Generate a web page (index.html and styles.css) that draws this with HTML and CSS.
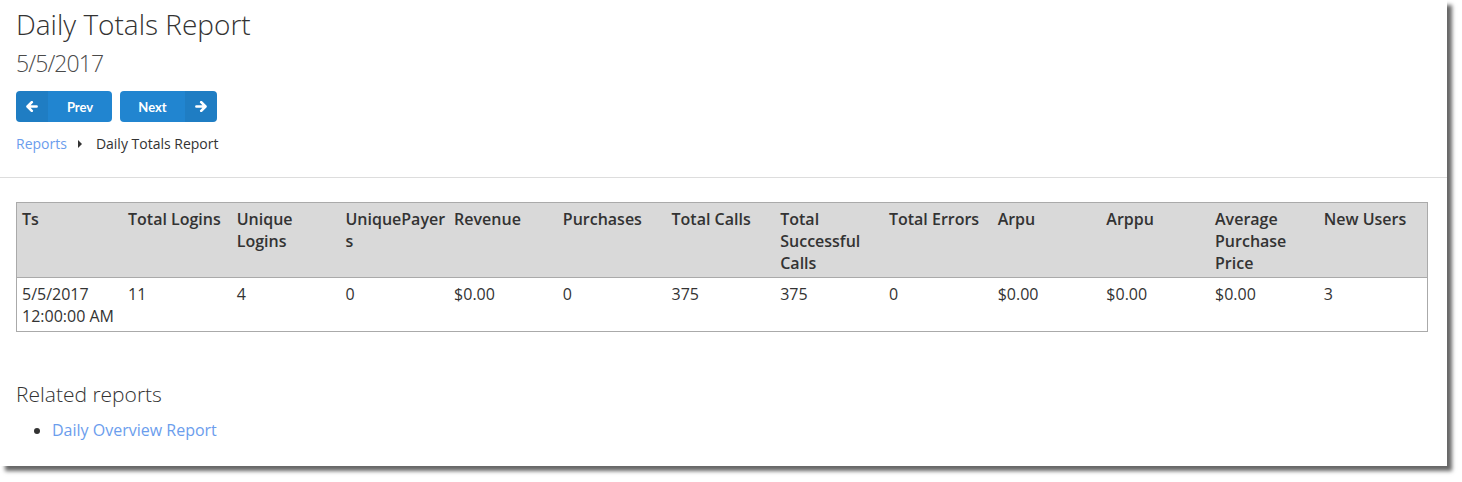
FILE: index.html
```html
<!DOCTYPE html>
<html>
<head>
<meta charset="utf-8">
<link rel="stylesheet" href="styles.css">
</head>
<body>
<div class="panel">
  <header class="head">
    <h1 class="title">Daily Totals Report</h1>
    <h2 class="date">5/5/2017</h2>
    <div class="buttons">
      <a class="btn btn-left" href="#">
        <span class="btn-icon"><svg width="12" height="11" viewBox="0 0 12 11"><path d="M5.8 1.2 L1.5 5.5 L5.8 9.8 M2 5.5 H10.6" fill="none" stroke="#fff" stroke-width="2.6" stroke-linecap="round" stroke-linejoin="round"/></svg></span>
        <span class="btn-text">Prev</span>
      </a>
      <a class="btn btn-right" href="#">
        <span class="btn-text">Next</span>
        <span class="btn-icon"><svg width="12" height="11" viewBox="0 0 12 11"><path d="M6.2 1.2 L10.5 5.5 L6.2 9.8 M10 5.5 H1.4" fill="none" stroke="#fff" stroke-width="2.6" stroke-linecap="round" stroke-linejoin="round"/></svg></span>
      </a>
    </div>
    <nav class="crumbs">
      <a class="crumb-link" href="#">Reports</a>
      <span class="crumb-sep"></span>
      <span class="crumb-current">Daily Totals Report</span>
    </nav>
  </header>
  <hr class="rule">
  <main class="content">
    <table class="grid">
      <thead>
        <tr>
          <th class="col-first">Ts</th><th>Total Logins</th><th>Unique Logins</th><th>UniquePayers</th><th>Revenue</th><th>Purchases</th><th>Total Calls</th><th>Total Successful Calls</th><th>Total Errors</th><th>Arpu</th><th>Arppu</th><th>Average Purchase Price</th><th>New Users</th>
        </tr>
      </thead>
      <tbody>
        <tr>
          <td>5/5/2017 12:00:00 AM</td><td>11</td><td>4</td><td>0</td><td>$0.00</td><td>0</td><td>375</td><td>375</td><td>0</td><td>$0.00</td><td>$0.00</td><td>$0.00</td><td>3</td>
        </tr>
      </tbody>
    </table>
    <h3 class="related">Related reports</h3>
    <ul class="related-list">
      <li><a class="rel-link" href="#">Daily Overview Report</a></li>
    </ul>
  </main>
</div>
</body>
</html>
```

FILE: styles.css
```css
html, body {
  margin: 0;
  padding: 0;
  background: #fff;
}
body {
  font-family: "Open Sans", "Liberation Sans", sans-serif;
  color: #333;
  width: 1462px;
  height: 482px;
  overflow: hidden;
}
.panel {
  width: 1447px;
  height: 466px;
  background: #fff;
  box-shadow: 5px 5px 4px rgba(0, 0, 0, 0.6);
  box-sizing: border-box;
}
.head {
  padding: 7px 16px 0;
}
.title {
  margin: 0;
  font-size: 28px;
  line-height: 34px;
  font-weight: 300;
  color: #333;
}
.date {
  margin: 7px 0 0;
  font-size: 23px;
  line-height: 30px;
  font-weight: 300;
  letter-spacing: -0.9px;
  color: #4a4a4a;
}
.buttons {
  display: flex;
  gap: 8px;
  margin-top: 13px;
}
.btn {
  display: flex;
  align-items: stretch;
  height: 31px;
  background: #2185d0;
  border-radius: 4px;
  overflow: hidden;
  text-decoration: none;
  color: #fff;
  font-family: Lato, "Liberation Sans", sans-serif;
  font-weight: 700;
  font-size: 13px;
}
.btn-left { width: 96px; }
.btn-right { width: 97px; }
.btn-icon {
  width: 32px;
  display: flex;
  align-items: center;
  justify-content: center;
  background: rgba(0, 0, 0, 0.06);
}
.btn-text {
  flex: 1;
  display: flex;
  align-items: center;
  justify-content: center;
}
.crumbs {
  display: flex;
  align-items: center;
  margin-top: 12px;
  font-size: 14px;
  line-height: 20px;
}
.crumb-link {
  color: #6b9ded;
  text-decoration: none;
}
.crumb-sep {
  width: 0;
  height: 0;
  border-top: 4px solid transparent;
  border-bottom: 4px solid transparent;
  border-left: 4px solid #333;
  margin: 0 14px 0 11px;
}
.crumb-current {
  color: #333;
}
.rule {
  margin: 23px 0 0;
  border: 0;
  border-top: 1px solid #ddd;
  height: 0;
}
.content {
  padding: 24px 16px 0 16px;
}
.grid {
  width: 1412px;
  table-layout: fixed;
  border-collapse: collapse;
  border: 1px solid #aaa;
  font-size: 16px;
  line-height: 22px;
}
.grid .col-first {
  width: 98px;
}
.grid th, .grid td {
  text-align: left;
  vertical-align: top;
  padding: 5px 3px 4px 5px;
  overflow-wrap: anywhere;
}
.grid th {
  background: #d9d9d9;
  font-weight: 600;
  color: #333;
  border-bottom: 1px solid #aaa;
  padding-bottom: 3px;
}
.grid td {
  color: #333;
}
.related {
  margin: 48px 0 0;
  font-size: 21px;
  line-height: 28px;
  font-weight: 300;
  color: #333;
}
.related-list {
  margin: 11px 0 0;
  padding-left: 36px;
  font-size: 16px;
  line-height: 22px;
}
.rel-link {
  color: #6b9ded;
  text-decoration: none;
}
```
